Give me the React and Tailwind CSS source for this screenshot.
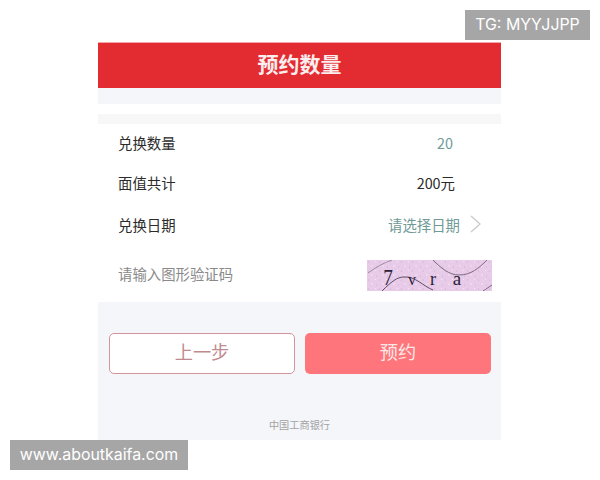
const cjk = "font-['Noto_Sans_CJK_SC','Noto_Sans',sans-serif]";

const Captcha = () => (
  <svg className="w-[125px] h-[31px] block" viewBox="0 0 125 31">
    <defs>
      <pattern id="noise" width="11" height="9" patternUnits="userSpaceOnUse">
        <rect width="11" height="9" fill="#e8cbe8" />
        <circle cx="1.5" cy="2" r="0.6" fill="#c4aec4" />
        <circle cx="5" cy="6" r="0.7" fill="#f5ecf5" />
        <circle cx="8.5" cy="1.5" r="0.6" fill="#f5ecf5" />
        <circle cx="9.5" cy="7" r="0.5" fill="#bfa9bf" />
        <circle cx="3" cy="8" r="0.4" fill="#d2bbd2" />
      </pattern>
    </defs>
    <rect width="125" height="31" fill="url(#noise)" />
    <path d="M15 31 C24 22 30 17 37 17 C48 16 56 26 66 30" fill="none" stroke="#5d4d63" strokeWidth="1" />
    <path d="M66 0 C74 8 82 15 92 15 C104 15 112 8 120 0" fill="none" stroke="#7d6a80" strokeWidth="1" />
    <path d="M1 13 C8 8 16 3 25 0" fill="none" stroke="#a08aa3" strokeWidth="1" />
    <path d="M116 31 C119 29 122 27 125 25" fill="none" stroke="#7d6a80" strokeWidth="1" />
    <g fontFamily="'Liberation Serif',serif" fill="#2a2138">
      <text x="21" y="25" fontSize="24" textAnchor="middle" transform="translate(21 0) scale(0.8 1) translate(-21 0)">7</text>
      <text x="45" y="25" fontSize="16" textAnchor="middle">v</text>
      <text x="66" y="25" fontSize="18" textAnchor="middle">r</text>
      <text x="90" y="25" fontSize="19" textAnchor="middle">a</text>
    </g>
  </svg>
);

const Row = ({ label, height, children }) => (
  <div className={`flex items-center justify-between pl-5 pb-[2px] ${height}`}>
    <span className="text-[14.4px] text-[#2b2b2b]">{label}</span>
    {children}
  </div>
);

export default function App() {
  return (
    <div className={`relative w-[600px] h-[480px] bg-white overflow-hidden pt-[42px] pl-[98px] ${cjk}`}>
      <div className="w-[403px] h-[398px] flex flex-col bg-[#f4f6fa]">
        <div className="h-[46px] shrink-0 bg-[#e32b32] border-t border-[#f3a5a8] flex items-center justify-center pb-[4px]">
          <span className="text-[21px] font-bold text-[#fbeeee] leading-none">预约数量</span>
        </div>
        <div className="h-4 shrink-0 bg-[#f4f6f9]" />
        <div className="h-[10px] shrink-0 bg-white" />
        <div className="h-[10px] shrink-0 bg-[#f7f7f7]" />

        <div className="h-[178px] shrink-0 bg-white flex flex-col">
          <Row label="兑换数量" height="h-[40px]">
            <span className="text-[14.4px] text-[#6f9a96] mr-[48px]">20</span>
          </Row>
          <Row label="面值共计" height="h-[40px]">
            <span className="text-[14.4px] text-[#2b2b2b] mr-[46px]">200元</span>
          </Row>
          <Row label="兑换日期" height="h-[43px]">
            <div className="flex items-center mr-5">
              <span className="text-[14.4px] text-[#6f9a96]">请选择日期</span>
              <svg className="ml-[10px] w-[11px] h-[18px]" viewBox="0 0 11 18" fill="none" stroke="#c9cccc" strokeWidth="1.4">
                <path d="M1 1 L10 9 L1 17" />
              </svg>
            </div>
          </Row>
          <div className="flex items-center justify-between pl-5 pr-[9px] h-[31px] mt-[13px]">
            <span className="text-[14.4px] text-[#8a8a8a] pb-[3px]">请输入图形验证码</span>
            <Captcha />
          </div>
        </div>

        <div className="flex gap-[10px] pl-[11px] mt-[31px]">
          <button className="w-[186px] h-[41px] pb-[3px] rounded-[5px] bg-white border border-[#d3959b] text-[18.2px] text-[#c08a8e]">
            上一步
          </button>
          <button className="w-[186px] h-[41px] pb-[3px] rounded-[5px] bg-[#fe757b] text-[18.2px] text-[#fde6e6]">
            预约
          </button>
        </div>

        <div className="mt-[46px] text-center text-[10.2px] leading-none text-[#a3a3a3]">中国工商银行</div>
      </div>

      <div className="absolute top-[10px] right-[10px] w-[125px] h-[30px] bg-[#a6a6a6] flex items-center justify-center text-[15.9px] text-white font-['Inter',sans-serif]">
        TG: MYYJJPP
      </div>
      <div className="absolute left-[10px] bottom-[10px] w-[178px] h-[30px] bg-[#a6a6a6] flex items-center justify-center text-[15.9px] text-white font-['Inter',sans-serif]">
        www.aboutkaifa.com
      </div>
    </div>
  );
}
